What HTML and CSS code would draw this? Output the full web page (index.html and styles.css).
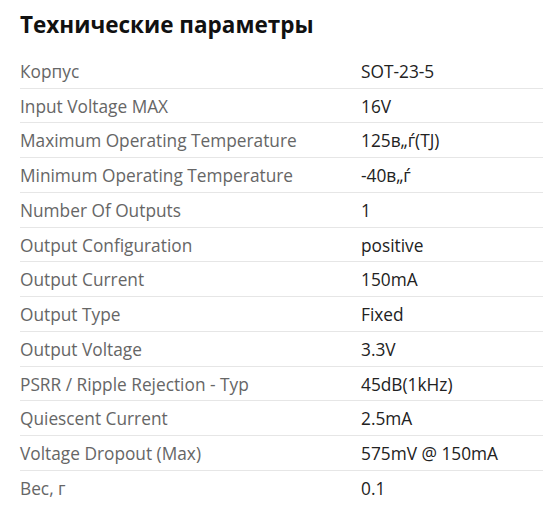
FILE: index.html
```html
<!DOCTYPE html>
<html lang="ru">
<head>
<meta charset="utf-8">
<link rel="stylesheet" href="styles.css">
</head>
<body>
<section class="specs">
  <h2 class="specs-title">Технические параметры</h2>
  <div class="spec-list">
    <div class="spec-row"><div class="spec-name">Корпус</div><div class="spec-value">SOT-23-5</div></div>
    <div class="spec-row"><div class="spec-name">Input Voltage MAX</div><div class="spec-value">16V</div></div>
    <div class="spec-row"><div class="spec-name">Maximum Operating Temperature</div><div class="spec-value">125в„ѓ(TJ)</div></div>
    <div class="spec-row"><div class="spec-name">Minimum Operating Temperature</div><div class="spec-value">-40в„ѓ</div></div>
    <div class="spec-row"><div class="spec-name">Number Of Outputs</div><div class="spec-value">1</div></div>
    <div class="spec-row"><div class="spec-name">Output Configuration</div><div class="spec-value">positive</div></div>
    <div class="spec-row"><div class="spec-name">Output Current</div><div class="spec-value">150mA</div></div>
    <div class="spec-row"><div class="spec-name">Output Type</div><div class="spec-value">Fixed</div></div>
    <div class="spec-row"><div class="spec-name">Output Voltage</div><div class="spec-value">3.3V</div></div>
    <div class="spec-row"><div class="spec-name">PSRR / Ripple Rejection - Typ</div><div class="spec-value">45dB(1kHz)</div></div>
    <div class="spec-row"><div class="spec-name">Quiescent Current</div><div class="spec-value">2.5mA</div></div>
    <div class="spec-row"><div class="spec-name">Voltage Dropout (Max)</div><div class="spec-value">575mV @ 150mA</div></div>
    <div class="spec-row"><div class="spec-name">Вес, г</div><div class="spec-value">0.1</div></div>
  </div>
</section>
</body>
</html>
```
FILE: styles.css
```css
html, body {
  margin: 0;
  padding: 0;
  background: #fff;
}
body {
  font-family: "Open Sans", "Noto Sans", sans-serif;
}
.specs {
  padding: 7px 0 0 20px;
}
.specs-title {
  margin: 0 0 11px;
  font-size: 22.5px;
  font-weight: 700;
  line-height: 36px;
  color: #111;
}
.spec-row {
  display: grid;
  grid-template-columns: 341px 1fr;
  padding: 6px 0 4px;
  line-height: 23.73px;
  font-size: 17.3px;
  border-bottom: 1px solid #e6e6e6;
}
.spec-row:last-child {
  border-bottom: none;
}
.spec-name {
  color: #666;
}
.spec-value {
  color: #222;
}
```
